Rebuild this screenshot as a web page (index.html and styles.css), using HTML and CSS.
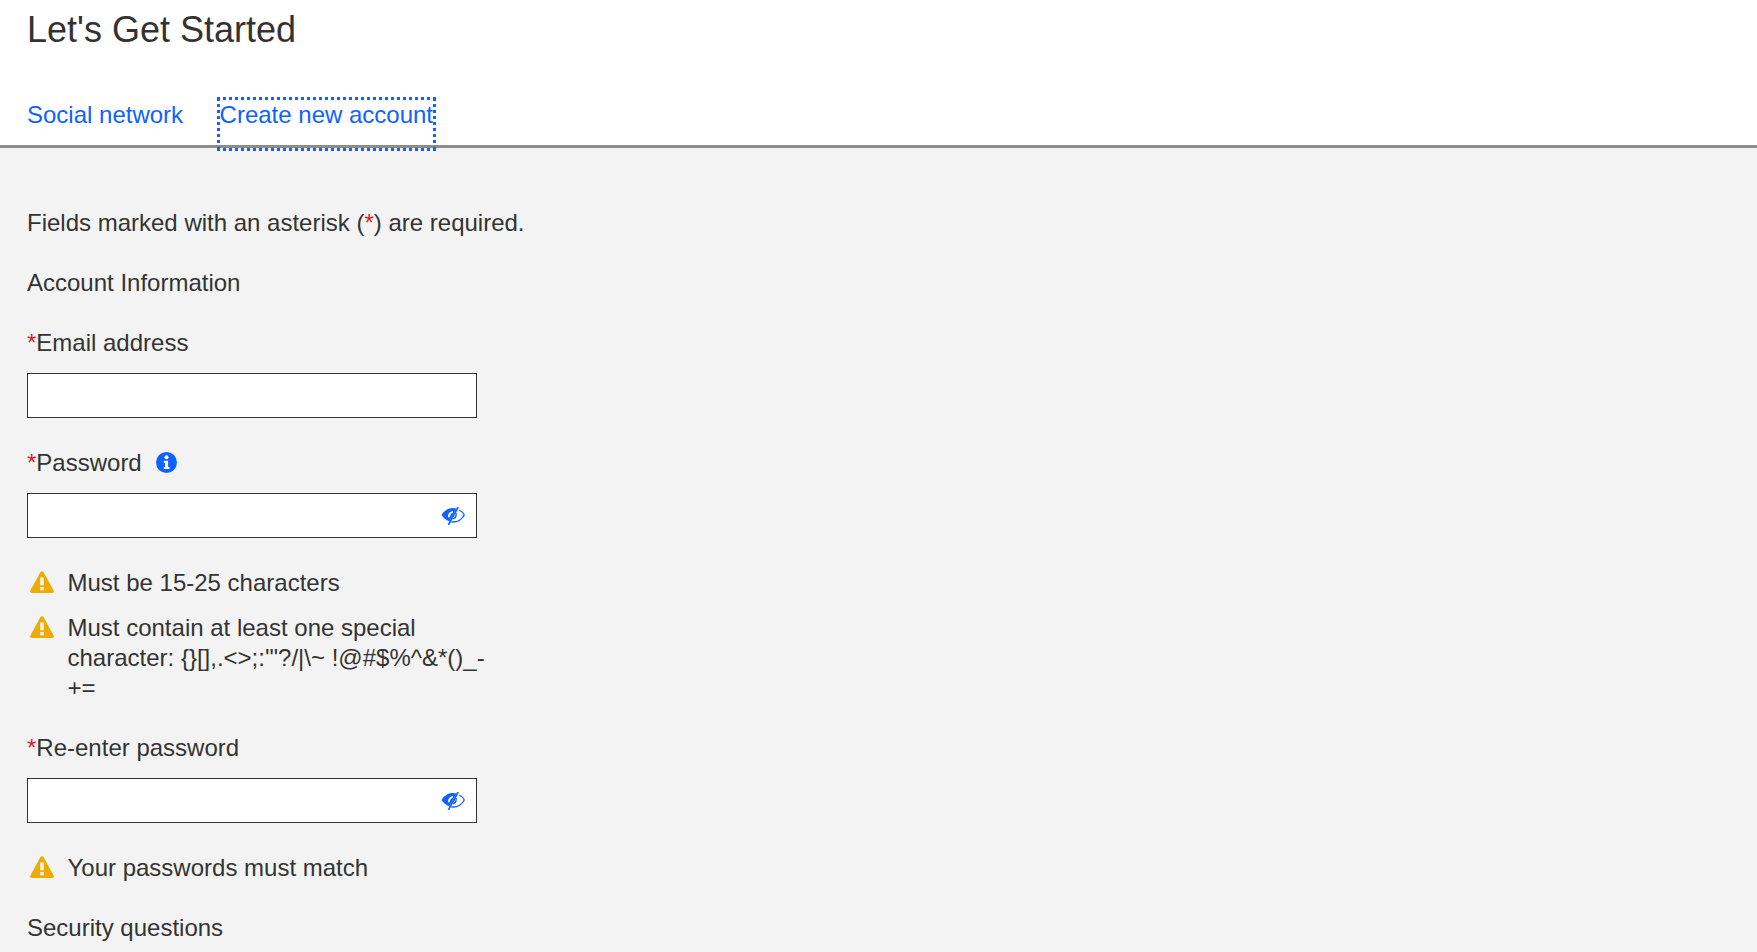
FILE: index.html
```html
<!DOCTYPE html>
<html lang="en">
<head>
<meta charset="utf-8">
<title>Let's Get Started</title>
<link rel="stylesheet" href="styles.css">
</head>
<body>
<svg class="defs" width="0" height="0" aria-hidden="true">
  <symbol id="warn" viewBox="0 0 24 22">
    <path d="M12 .2c.7 0 1.300.4 1.700 1l10 18.500c.7 1.200-.1 2.300-1.400 2.300H1.700C.4 22-.4 20.900.3 19.700l10-18.500c.4-.6 1-1 1.700-1z" fill="#efac00"/>
    <rect x="10.200" y="6.500" width="3.600" height="7.800" fill="#f3f3f3"/>
    <rect x="10.200" y="16" width="3.600" height="3.400" fill="#f3f3f3"/>
  </symbol>
  <symbol id="eye" viewBox="0 0 24 18">
    <path d="M.5 8C3 3.700 7 1 12 1c1.200 0 2.400.2 3.500.5L8.300 14.500C5 13 2.300 10.800.5 8z" fill="#0f62fe"/>
    <path d="M12 3.900C9.500 4.200 7.500 5.800 7 8.500l.5 2 1.300-.2c.1-2.200 1.300-3.900 3.200-4.700z" fill="#fff"/>
    <path d="M18.300 3c2.200 1.200 3.900 2.900 5 5-2.300 4.200-6.300 7-11.300 7-.6 0-1.200 0-1.800-.1M15 6c.5 2.300-.5 4.900-2.900 5.900" fill="none" stroke="#0f62fe" stroke-width="1.300"/>
    <path d="M17.200 0 7.400 17.800" fill="none" stroke="#0f62fe" stroke-width="1.700"/>
  </symbol>
</svg>

<header class="top">
  <h1 class="title">Let's Get Started</h1>
  <nav class="tabs">
    <a class="tab" href="#">Social network</a>
    <a class="tab tab-focus" href="#">Create new account</a>
  </nav>
</header>

<main class="content">
  <form class="form">
    <p class="line">Fields marked with an asterisk (<span class="req">*</span>) are required.</p>
    <p class="line">Account Information</p>

    <div class="field">
      <label class="label"><span class="req">*</span>Email address</label>
      <div class="box"></div>
    </div>

    <div class="field">
      <label class="label"><span class="req">*</span>Password
        <svg class="info" viewBox="0 0 21 21" aria-hidden="true">
          <circle cx="10.500" cy="10.500" r="10.500" fill="#0f62fe"/>
          <circle cx="10.500" cy="5.300" r="2" fill="#fff"/>
          <path d="M7.800 8.700h4.300v6.300h1.300v2H7.800v-2h1.300v-4.300H7.800z" fill="#fff"/>
        </svg>
      </label>
      <div class="box">
        <svg class="eye"><use href="#eye"/></svg>
      </div>
    </div>

    <ul class="rules">
      <li class="rule"><svg class="warn"><use href="#warn"/></svg><span class="rule-text">Must be 15-25 characters</span></li>
      <li class="rule"><svg class="warn"><use href="#warn"/></svg><span class="rule-text">Must contain at least one special character: {}[],.&lt;&gt;;:'"?/|\~ !@#$%^&amp;*()_-+=</span></li>
    </ul>

    <div class="field">
      <label class="label"><span class="req">*</span>Re-enter password</label>
      <div class="box">
        <svg class="eye"><use href="#eye"/></svg>
      </div>
    </div>

    <ul class="rules">
      <li class="rule"><svg class="warn"><use href="#warn"/></svg><span class="rule-text">Your passwords must match</span></li>
    </ul>

    <p class="line">Security questions</p>
  </form>
</main>
</body>
</html>
```

FILE: styles.css
```css
* { box-sizing: border-box; }
html, body { margin: 0; padding: 0; }
body {
  height: 952px;
  overflow: hidden;
  display: flex;
  flex-direction: column;
  background: #f3f3f3;
  color: #333;
  font-family: "Liberation Sans", Arial, sans-serif;
  font-size: 24px;
  line-height: 30px;
}
.defs { position: absolute; }
.top { background: #fff; padding-top: 8px; }
.title {
  margin: 0 0 48px;
  padding-left: 27px;
  font-size: 36px;
  font-weight: 400;
  line-height: 44px;
}
.tabs {
  display: flex;
  gap: 36.500px;
  height: 48px;
  padding-left: 27px;
  border-bottom: 3px solid #8c8c8c;
}
.tab { height: 48px; color: #0f62fe; text-decoration: none; }
.tab-focus { outline: 3px dotted #0f62fe; }
.content { flex: 1; padding: 60px 27px 0; }
.form { display: flex; flex-direction: column; gap: 30px; }
.line { margin: 0; }
.field { display: flex; flex-direction: column; gap: 15px; }
.label { display: flex; align-items: center; }
.req { color: #e0182d; }
.info { width: 21px; height: 21px; margin: -2px 0 0 14px; }
.box {
  display: flex;
  align-items: center;
  justify-content: flex-end;
  width: 450px;
  height: 45px;
  padding-right: 11px;
  background: #fff;
  border: 1.500px solid #333;
}
.eye { width: 24px; height: 18px; }
.rules {
  display: flex;
  flex-direction: column;
  gap: 15px;
  margin: 0;
  padding: 0;
  list-style: none;
}
.rule { display: flex; gap: 13.500px; width: 461.500px; }
.warn { flex: none; width: 24px; height: 22px; margin: 3px 0 0 3px; }
.rule-text { flex: 1; }
```
